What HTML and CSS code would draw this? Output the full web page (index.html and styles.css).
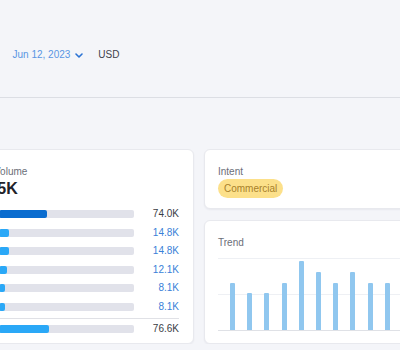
FILE: index.html
```html
<!DOCTYPE html>
<html>
<head>
  <title>Keyword Overview</title>
  <link rel="stylesheet" href="styles.css">
</head>
<body>
  <div class="header">
    <div class="filters">
      <span class="date">Jun 12, 2023
        <svg class="chevron" width="8" height="5" viewBox="0 0 8 5"><path d="M1 1l3 3 3-3" fill="none" stroke="#2b73d4" stroke-width="1.6" stroke-linecap="round" stroke-linejoin="round"/></svg>
      </span>
      <span class="currency">USD</span>
    </div>
  </div>

  <div class="main">
    <div class="card volume">
      <div class="label">Volume</div>
      <div class="big">74.5K</div>
      <div class="rows">
        <div class="row"><div class="track"><div class="fill dark" style="width:35.6%"></div></div><span class="val">74.0K</span></div>
        <div class="row"><div class="track"><div class="fill" style="width:7.1%"></div></div><span class="val link">14.8K</span></div>
        <div class="row"><div class="track"><div class="fill" style="width:7.1%"></div></div><span class="val link">14.8K</span></div>
        <div class="row"><div class="track"><div class="fill" style="width:6.2%"></div></div><span class="val link">12.1K</span></div>
        <div class="row"><div class="track"><div class="fill" style="width:4.2%"></div></div><span class="val link">8.1K</span></div>
        <div class="row"><div class="track"><div class="fill" style="width:4.2%"></div></div><span class="val link">8.1K</span></div>
      </div>
      <div class="row total"><div class="track"><div class="fill" style="width:37%"></div></div><span class="val">76.6K</span></div>
    </div>

    <div class="side">
      <div class="card intent">
        <div class="label">Intent</div>
        <span class="badge">Commercial</span>
      </div>
      <div class="card trend">
        <div class="label">Trend</div>
        <div class="chart">
          <div class="bar" style="height:65%"></div>
          <div class="bar" style="height:52%"></div>
          <div class="bar" style="height:52%"></div>
          <div class="bar" style="height:65%"></div>
          <div class="bar" style="height:96%"></div>
          <div class="bar" style="height:80%"></div>
          <div class="bar" style="height:65%"></div>
          <div class="bar" style="height:80%"></div>
          <div class="bar" style="height:65%"></div>
          <div class="bar" style="height:65%"></div>
          <div class="bar" style="height:80%"></div>
          <div class="bar" style="height:65%"></div>
        </div>
      </div>
    </div>
  </div>
</body>
</html>
```

FILE: styles.css
```css
html, body {
  margin: 0;
  overflow: hidden;
}

body {
  background-color: #f4f5f9;
  font-family: "Liberation Sans", Arial, sans-serif;
  font-size: 10px;
  line-height: 14px;
  color: #3a3d45;
}

.header {
  height: 98px;
  border-bottom: 1px solid #dcdee4;
  box-sizing: border-box;
  padding: 48px 0 0 12.5px;
}

.filters {
  display: flex;
  align-items: center;
  gap: 15px;
}

.date {
  color: #5a95e3;
  display: flex;
  align-items: center;
  gap: 5px;
}

.chevron {
  display: block;
}

.currency {
  color: #3f424b;
}

.main {
  display: grid;
  grid-template-columns: 217px 240px;
  gap: 10px;
  align-items: start;
  margin-left: -23px;
  padding-top: 51px;
}

.card {
  background-color: #fff;
  border: 1px solid #e8e9ee;
  border-radius: 6px;
  box-shadow: 0 1px 2px rgba(30, 35, 60, 0.06);
  box-sizing: border-box;
}

.label {
  color: #6b6e78;
}

.volume {
  padding: 14.5px 14px 4px 16px;
}

.big {
  font-size: 16px;
  line-height: 20px;
  font-weight: bold;
  color: #1f2229;
  margin-left: -19px;
}

.rows {
  margin-top: 6.5px;
}

.row {
  display: flex;
  align-items: center;
  height: 18.5px;
  padding-left: 5px;
}

.track {
  flex: 1;
  height: 8px;
  background-color: #e1e2ea;
  border-radius: 2px;
  overflow: hidden;
}

.fill {
  height: 100%;
  background-color: #2aa8f7;
  border-radius: 2px;
}

.fill.dark {
  background-color: #0a6ccf;
}

.val {
  width: 45px;
  text-align: right;
  color: #3a3d45;
}

.val.link {
  color: #3a7fd8;
}

.total {
  border-top: 1px solid #e0e1e6;
  margin-top: 2px;
  padding-top: 1px;
}

.side {
  display: flex;
  flex-direction: column;
  gap: 11px;
}

.intent {
  height: 60px;
  padding: 14.5px 13px 0 13px;
}

.badge {
  display: inline-block;
  margin-top: 0.5px;
  height: 19px;
  line-height: 19px;
  padding: 0 6px;
  border-radius: 10px;
  background-color: #fce08a;
  color: #a8812a;
}

.trend {
  height: 124px;
  padding: 14.5px 0 0 13px;
}

.chart {
  margin-top: 8.5px;
  height: 72px;
  border-bottom: 1px solid #dfe1e6;
  background:
    linear-gradient(#eef0f4, #eef0f4) top / 100% 1px no-repeat,
    linear-gradient(#eef0f4, #eef0f4) center / 100% 1px no-repeat;
  display: flex;
  align-items: flex-end;
  gap: 12.2px;
  padding-left: 12px;
}

.bar {
  width: 5px;
  flex: none;
  background-color: #90c7ef;
  border-radius: 1px 1px 0 0;
}
```
